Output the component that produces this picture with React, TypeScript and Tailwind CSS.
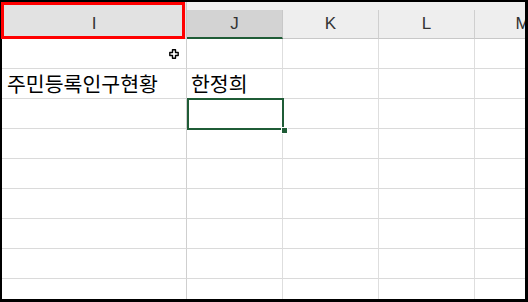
import React from "react"

const cols = ["J", "K", "L", "M"]

const rows: { i?: string; j?: string }[] = [
  {},
  { i: "주민등록인구현황", j: "한정희" },
  {},
  {},
  {},
  {},
  {},
  {},
  {},
]

const kr = { fontFamily: '"Noto Sans CJK KR", "Noto Sans", sans-serif' }

export default function App() {
  return (
    <div className="relative w-[528px] h-[302px] bg-black pt-[2px] pl-[2px] pr-[3px] pb-[3px]">
      <div className="relative w-full h-full bg-white overflow-hidden">

        {/* Column headers */}
        <div
          className="flex"
          style={{ fontFamily: '"Liberation Sans", Arial, sans-serif' }}
        >
          <div className="shrink-0 w-[185px] h-[37px] bg-[#e2e2e2] border-r border-b border-[#c8c8c8] flex items-center justify-center pt-[8px] text-[17px] text-[#333]">
            I
          </div>
          {cols.map((c) => (
            <div key={c} className="shrink-0 w-[96px] flex flex-col">
              <div className="h-[8px] bg-[#f1f1f1]" />
              <div
                className={
                  c === "J"
                    ? "h-[29px] bg-[#d3d3d3] border-r border-[#c8c8c8] border-b-2 border-b-[#1f5c36] flex items-center justify-center text-[17px] text-[#333]"
                    : "h-[29px] bg-[#eeeeee] border-r border-[#cfcfcf] border-b border-b-[#c8c8c8] flex items-center justify-center text-[17px] text-[#333]"
                }
              >
                {c}
              </div>
            </div>
          ))}
        </div>

        {/* Cells */}
        {rows.map((r, idx) => (
          <div key={idx} className="flex h-[30px]">
            <div
              className="shrink-0 w-[185px] border-r border-b border-r-[#cfcfcf] border-b-[#dadada] flex items-center pl-[5px] text-[20.5px] text-black whitespace-nowrap"
              style={kr}
            >
              {r.i}
            </div>
            {cols.map((c) => (
              <div
                key={c}
                className="shrink-0 w-[96px] border-r border-b border-r-[#dedede] border-b-[#dadada] flex items-center pl-[4px] text-[20.5px] text-black whitespace-nowrap"
                style={kr}
              >
                {c === "J" ? r.j : null}
              </div>
            ))}
          </div>
        ))}

        {/* Active cell J3 */}
        <div className="absolute left-[185px] top-[96px] w-[97px] h-[32px] border-2 border-[#1f5c36]" />
        <div className="absolute left-[279px] top-[125px] w-[5px] h-[5px] bg-[#1f5c36] border border-white box-content" />

        {/* Cell cursor */}
        <svg
          className="absolute left-[167px] top-[47px]"
          width="10"
          height="10"
          viewBox="0 0 10 10"
        >
          <path
            d="M3.5 0.8 H6.5 V3.5 H9.2 V6.5 H6.5 V9.2 H3.5 V6.5 H0.8 V3.5 H3.5 Z"
            fill="white"
            stroke="black"
            strokeWidth="1.4"
            strokeLinejoin="round"
          />
        </svg>
      </div>

      {/* Red highlight */}
      <div className="absolute left-[1px] top-[2px] w-[184px] h-[37px] border-[3px] border-[#ff0000]" />
    </div>
  )
}
